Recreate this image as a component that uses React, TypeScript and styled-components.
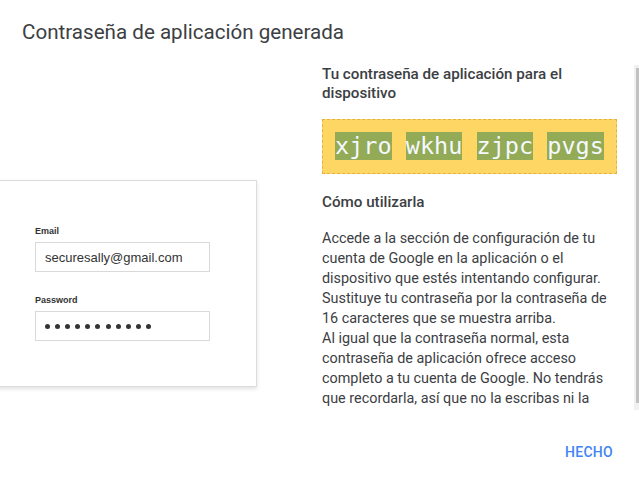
import React from "react";
import styled, { createGlobalStyle } from "styled-components";

const Global = createGlobalStyle`
  html, body { margin: 0; padding: 0; background: #fff; overflow: hidden; }
  body { font-family: Roboto, "Noto Sans", Arial, sans-serif; }
`;

const Dialog = styled.div`
  width: 639px;
  height: 484px;
  display: flex;
  flex-direction: column;
  overflow: hidden;
`;

const Title = styled.h1`
  margin: 18px 0 0 22px;
  font-size: 20.6px;
  line-height: 28px;
  font-weight: 400;
  color: #3c4043;
  height: 19px;
  overflow: visible;
  white-space: nowrap;
`;

const Body = styled.div`
  margin-top: 28px;
  display: flex;
  height: 345px;
`;

const LeftCol = styled.div`
  width: 322px;
  flex: none;
  padding-top: 115px;
  box-sizing: border-box;
`;

const Card = styled.div`
  margin-left: -20px;
  width: 277px;
  height: 207px;
  box-sizing: border-box;
  background: #fff;
  border: 1px solid #dcdcdc;
  box-shadow: 0 2px 4px rgba(0, 0, 0, 0.12);
  padding: 44px 0 0 54px;
  font-family: "Liberation Sans", Arial, sans-serif;
`;

const FieldLabel = styled.div`
  font-size: 9px;
  font-weight: 700;
  color: #333;
  line-height: 12px;
  margin-bottom: 5px;
`;

const Input = styled.div`
  width: 175px;
  height: 30px;
  box-sizing: border-box;
  border: 1px solid #d9d9d9;
  padding: 0 9px;
  display: flex;
  align-items: center;
  gap: 5.1px;
  font-size: 13px;
  color: #333;
  margin-bottom: 22px;
`;

const Dot = styled.span`
  width: 5px;
  height: 5px;
  border-radius: 50%;
  background: #333;
`;

const Content = styled.div`
  width: 312px;
  flex: none;
  overflow: hidden;
  box-sizing: border-box;
  padding-right: 17px;
`;

const ScrollTrack = styled.div`
  width: 15px;
  flex: none;
  background: #f1f1f1;
  padding: 3px 0 7px 2px;
  box-sizing: border-box;
`;

const ScrollThumb = styled.div`
  height: 100%;
  background: #c1c1c1;
`;

const Heading = styled.h2`
  margin: 0;
  font-size: 15.2px;
  line-height: 19px;
  font-weight: 500;
  color: #3c4043;
`;

const CodeBox = styled.div`
  margin-top: 16px;
  height: 55px;
  box-sizing: border-box;
  background: #fdd663;
  border: 1px dashed #e3b341;
  display: flex;
  align-items: center;
  justify-content: center;
`;

const Code = styled.span`
  font-family: "DejaVu Sans Mono", monospace;
  font-size: 23.5px;
  white-space: pre;
  color: #f4f8ff;
  line-height: 29px;
`;

const Chunk = styled.span`
  background: #93aa56;
`;

const SubHeading = styled(Heading)`
  margin-top: 19px;
`;

const Para = styled.p`
  margin: 17px 0 0 0;
  font-size: 14.4px;
  line-height: 20px;
  color: #3c4043;
`;

const Footer = styled.div`
  flex: 1;
  display: flex;
  justify-content: flex-end;
  align-items: flex-start;
  padding: 32px 26px 0 0;
`;

const DoneButton = styled.button`
  border: 0;
  background: none;
  padding: 0;
  font-family: Roboto, sans-serif;
  font-size: 14px;
  font-weight: 500;
  letter-spacing: 0.3px;
  color: #4285f4;
  line-height: 20px;
`;

const groups = ["xjro", "wkhu", "zjpc", "pvgs"];

export default function App() {
  return (
    <>
      <Global />
      <Dialog>
        <Title>Contraseña de aplicación generada</Title>
        <Body>
          <LeftCol>
            <Card>
              <FieldLabel>Email</FieldLabel>
              <Input>securesally@gmail.com</Input>
              <FieldLabel>Password</FieldLabel>
              <Input>
                {Array.from({ length: 11 }).map((_, i) => (
                  <Dot key={i} />
                ))}
              </Input>
            </Card>
          </LeftCol>
          <Content>
            <Heading>Tu contraseña de aplicación para el dispositivo</Heading>
            <CodeBox>
              <Code>
                {groups.map((g, i) => (
                  <React.Fragment key={g}>
                    {i > 0 && " "}
                    <Chunk>{g}</Chunk>
                  </React.Fragment>
                ))}
              </Code>
            </CodeBox>
            <SubHeading>Cómo utilizarla</SubHeading>
            <Para>
              Accede a la sección de configuración de tu cuenta de Google en la
              aplicación o el dispositivo que estés intentando configurar.
              Sustituye tu contraseña por la contraseña de 16 caracteres que se
              muestra arriba.
              <br />
              Al igual que la contraseña normal, esta contraseña de aplicación
              ofrece acceso completo a tu cuenta de Google. No tendrás que
              recordarla, así que no la escribas ni la compartas con nadie.
            </Para>
          </Content>
          <ScrollTrack>
            <ScrollThumb />
          </ScrollTrack>
        </Body>
        <Footer>
          <DoneButton>HECHO</DoneButton>
        </Footer>
      </Dialog>
    </>
  );
}
